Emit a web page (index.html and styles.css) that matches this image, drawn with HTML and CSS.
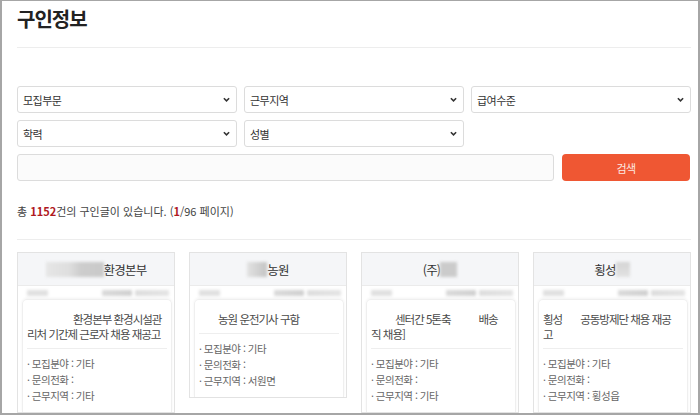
FILE: index.html
```html
<!DOCTYPE html>
<html lang="ko">
<head>
<meta charset="utf-8">
<title>구인정보</title>
<link rel="stylesheet" href="styles.css">
</head>
<body>
<div class="frame">
  <div class="page">
    <h1 class="title">구인정보</h1>

    <div class="filters">
      <div class="select"><span>모집부문</span><svg class="chev" viewBox="0 0 8 5" width="7" height="5"><path d="M1 1 L4 4 L7 1" /></svg></div>
      <div class="select"><span>근무지역</span><svg class="chev" viewBox="0 0 8 5" width="7" height="5"><path d="M1 1 L4 4 L7 1" /></svg></div>
      <div class="select"><span>급여수준</span><svg class="chev" viewBox="0 0 8 5" width="7" height="5"><path d="M1 1 L4 4 L7 1" /></svg></div>
      <div class="select"><span>학력</span><svg class="chev" viewBox="0 0 8 5" width="7" height="5"><path d="M1 1 L4 4 L7 1" /></svg></div>
      <div class="select"><span>성별</span><svg class="chev" viewBox="0 0 8 5" width="7" height="5"><path d="M1 1 L4 4 L7 1" /></svg></div>
    </div>

    <div class="search-row">
      <div class="search-input"></div>
      <button class="search-btn">검색</button>
    </div>

    <p class="count">총 <b>1152</b>건의 구인글이 있습니다. (<b>1</b>/96 페이지)</p>

    <div class="cards">
      <div class="card">
        <div class="card-head"><span class="blur name-a"></span>환경본부</div>
        <div class="card-meta"><span class="blur m-sm"></span><span class="meta-right"><span class="blur m-md"></span><span class="blur m-lg"></span></span></div>
        <div class="card-panel">
          <div class="card-title"><span class="gap g49"></span>환경본부 환경시설관<br>리처 기간제 근로자 채용 재공고</div>
          <ul class="card-info">
            <li>· 모집분야 : 기타</li>
            <li>· 문의전화 :</li>
            <li>· 근무지역 : 기타</li>
          </ul>
        </div>
      </div>

      <div class="card">
        <div class="card-head"><span class="blur name-b"></span>농원</div>
        <div class="card-meta"><span class="blur m-sm"></span><span class="meta-right"><span class="blur m-md"></span><span class="blur m-lg"></span></span></div>
        <div class="card-panel">
          <div class="card-title"><span class="gap g19"></span>농원 운전기사 구함</div>
          <ul class="card-info">
            <li>· 모집분야 : 기타</li>
            <li>· 문의전화 :</li>
            <li>· 근무지역 : 서원면</li>
          </ul>
        </div>
      </div>

      <div class="card">
        <div class="card-head">(주)<span class="blur name-c"></span></div>
        <div class="card-meta"><span class="blur m-sm"></span><span class="meta-right"><span class="blur m-md"></span><span class="blur m-lg"></span></span></div>
        <div class="card-panel">
          <div class="card-title"><span class="gap g24"></span>센터간 5톤축<span class="gap g28"></span>배송<br>직 채용]</div>
          <ul class="card-info">
            <li>· 모집분야 : 기타</li>
            <li>· 문의전화 :</li>
            <li>· 근무지역 : 기타</li>
          </ul>
        </div>
      </div>

      <div class="card">
        <div class="card-head">횡성<span class="blur name-d"></span></div>
        <div class="card-meta"><span class="blur m-sm"></span><span class="meta-right"><span class="blur m-md"></span><span class="blur m-lg"></span></span></div>
        <div class="card-panel">
          <div class="card-title">횡성<span class="gap g18"></span>공동방제단 채용 재공<br>고</div>
          <ul class="card-info">
            <li>· 모집분야 : 기타</li>
            <li>· 문의전화 :</li>
            <li>· 근무지역 : 횡성읍</li>
          </ul>
        </div>
      </div>
    </div>
  </div>
</div>
</body>
</html>
```

FILE: styles.css
```css
* { box-sizing: border-box; }

html, body {
  margin: 0;
  padding: 0;
  background: #ffffff;
}

body {
  font-family: "Noto Sans CJK KR", "Noto Sans", sans-serif;
  color: #333333;
}

.frame {
  width: 700px;
  height: 415px;
  border: 2px solid #a6a6a6;
  border-top-width: 1px;
  overflow: hidden;
  background: #ffffff;
}

.page {
  padding: 0 7px 0 15px;
}

.title {
  margin: 0;
  padding: 6px 0 16px;
  font-size: 20px;
  line-height: 24px;
  font-weight: 700;
  letter-spacing: -1px;
  color: #222222;
  border-bottom: 1px solid #ededed;
}

.filters {
  margin-top: 38px;
  display: grid;
  grid-template-columns: repeat(3, 220px);
  grid-auto-rows: 27px;
  gap: 7px;
}

.select {
  display: flex;
  align-items: center;
  justify-content: space-between;
  padding: 0 6px 0 5px;
  border: 1px solid #dcdcdc;
  border-radius: 3px;
  background: #ffffff;
  font-size: 11px;
  letter-spacing: -0.5px;
  color: #333333;
}

.chev {
  display: block;
  fill: none;
  stroke: #333333;
  stroke-width: 1.8;
}

.search-row {
  margin-top: 7px;
  display: flex;
  gap: 8px;
  height: 27px;
}

.search-input {
  width: 537px;
  border: 1px solid #dcdcdc;
  border-radius: 3px;
  background: #fbfbfb;
}

.search-btn {
  width: 128px;
  border: 0;
  border-radius: 4px;
  background: #ef5733;
  color: #fde9e2;
  font-family: "Noto Sans CJK KR", "Noto Sans", sans-serif;
  font-size: 11px;
  letter-spacing: -0.5px;
  padding: 0;
}

.count {
  margin: 22px 0 0;
  padding-bottom: 20px;
  font-size: 11px;
  line-height: 16px;
  letter-spacing: 0;
  color: #444444;
  border-bottom: 1px solid #ededed;
}

.count b {
  color: #b0191e;
  font-weight: 700;
}

.cards {
  margin-top: 12px;
  display: grid;
  grid-template-columns: repeat(4, 158px);
  column-gap: 14px;
  align-items: start;
}

.card {
  border: 1px solid #e3e3e3;
  background: #ffffff;
}

.card-head {
  height: 33px;
  display: flex;
  align-items: center;
  justify-content: center;
  background: #f5f6f8;
  border-bottom: 1px solid #ebebeb;
  font-size: 12.5px;
  letter-spacing: -0.8px;
  color: #333333;
}

.blur {
  display: inline-block;
  filter: blur(1.4px);
}

.name-a {
  width: 58px;
  height: 15px;
  background: linear-gradient(90deg, #e6e6e6 0%, #dedede 40%, #cdcdcd 60%, #c9c9c9 100%);
}

.name-b {
  width: 20px;
  height: 15px;
  background: linear-gradient(90deg, #e2e2e2, #c4c4c4);
}

.name-c {
  width: 17px;
  height: 15px;
  background: #cbcbcb;
}

.name-d {
  width: 14px;
  height: 15px;
  background: linear-gradient(180deg, #d4d4d4, #e2e2e2);
}

.card-meta {
  height: 13px;
  display: flex;
  align-items: center;
  justify-content: space-between;
  padding: 0 5px 0 9px;
}

.meta-right {
  display: flex;
  gap: 3px;
}

.m-sm {
  width: 21px;
  height: 6px;
  background: #e0e0e0;
}

.m-md {
  width: 30px;
  height: 6px;
  background: linear-gradient(90deg, #dadada, #d0d0d0);
}

.m-lg {
  width: 34px;
  height: 6px;
  background: linear-gradient(90deg, #dddddd, #e4e4e4);
}

.card-panel {
  margin: 0 2px 0 4px;
  border: 1px solid #efefef;
  border-bottom: 0;
  border-radius: 5px 5px 0 0;
  box-shadow: 0 -1px 3px rgba(0, 0, 0, 0.05);
  padding: 0 4px;
}

.card-title {
  padding: 12px 0 6px;
  font-size: 11.5px;
  line-height: 15px;
  letter-spacing: -1px;
  color: #4a4a4a;
  white-space: nowrap;
  border-bottom: 1px solid #eeeeee;
}

.gap {
  display: inline-block;
}

.g49 { width: 46px; }
.g19 { width: 19px; }
.g24 { width: 24px; }
.g28 { width: 28px; }
.g18 { width: 18px; }

.card-info {
  list-style: none;
  margin: 0;
  padding: 7px 0 8px;
  font-size: 10.5px;
  line-height: 16px;
  letter-spacing: -0.5px;
  color: #666666;
}
```
